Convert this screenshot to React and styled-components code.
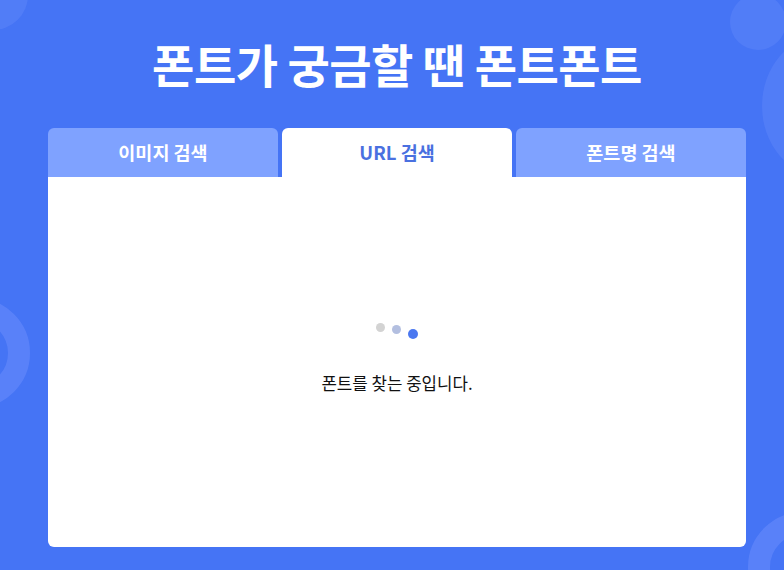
import React, { useState } from 'react'
import styled, { createGlobalStyle } from 'styled-components'

const GlobalStyle = createGlobalStyle`
    html, body {
        margin: 0;
        padding: 0;
        background-color: #4574f5;
    }
    body {
        font-family: "Noto Sans CJK KR", "Noto Sans", sans-serif;
    }
`

const Page = styled.div`
    position: relative;
    overflow: hidden;
    width: 100%;
    height: 570px;
    background-color: #4574f5;
    display: flex;
    flex-flow: column nowrap;
    align-items: center;
    box-sizing: border-box;
    padding: 0 38px 23px 48px;
`

const Blob = styled.div`
    position: absolute;
    border-radius: 50%;
    box-sizing: border-box;
    background: ${props => props.ring ? 'transparent' : 'rgba(120, 150, 255, 0.25)'};
    border: ${props => props.ring ? '22px solid rgba(120, 150, 255, 0.4)' : 'none'};
    pointer-events: none;
`

const Title = styled.h1`
    position: relative;
    margin: 0;
    height: 128px;
    display: flex;
    align-items: center;
    justify-content: center;
    padding-bottom: 2px;
    box-sizing: border-box;
    color: #ffffff;
    font-size: 46px;
    font-weight: 700;
    letter-spacing: -0.5px;
`

const Board = styled.div`
    position: relative;
    width: 698px;
    flex: 1;
    display: flex;
    flex-flow: column nowrap;
`

const TabBar = styled.div`
    display: grid;
    grid-template-columns: repeat(3, 1fr);
    gap: 4px;
    height: 49px;
`

const Tab = styled.button`
    border: none;
    margin: 0;
    padding: 0 0 2px;
    border-radius: 6px 6px 0 0;
    font-family: inherit;
    font-size: 18.5px;
    font-weight: 700;
    cursor: pointer;
    background-color: ${props => props.active ? '#ffffff' : '#7fa2ff'};
    color: ${props => props.active ? '#4a70e0' : '#ffffff'};
`

const Panel = styled.div`
    flex: 1;
    background-color: #ffffff;
    border-radius: 0 0 6px 6px;
    display: flex;
    flex-flow: column nowrap;
    align-items: center;
    justify-content: center;
    padding-bottom: 6px;
`

const Dots = styled.div`
    display: flex;
    gap: 7px;
    height: 20px;
    margin-left: 0;
`

const Dot = styled.span`
    width: ${props => props.size}px;
    height: ${props => props.size}px;
    border-radius: 50%;
    background-color: ${props => props.color};
    margin-top: ${props => props.drop}px;
`

const Message = styled.p`
    margin: 28px 0 0;
    font-size: 16.8px;
    color: #111111;
`

const tabs = ['이미지 검색', 'URL 검색', '폰트명 검색']

const App = () => {
    const [current, setCurrent] = useState(1)

    return (
        <Page>
            <GlobalStyle />
            <Blob style={{ width: 70, height: 70, left: -42, top: -40 }} />
            <Blob style={{ width: 56, height: 56, left: 730, top: -6 }} />
            <Blob style={{ width: 120, height: 140, left: 762, top: 36 }} />
            <Blob ring style={{ width: 110, height: 110, left: -80, top: 298 }} />
            <Blob ring style={{ width: 110, height: 110, left: 748, top: 512 }} />
            <Title>폰트가 궁금할 땐 폰트폰트</Title>
            <Board>
                <TabBar>
                    {tabs.map((label, i) => (
                        <Tab key={label} active={i === current} onClick={() => setCurrent(i)}>
                            {label}
                        </Tab>
                    ))}
                </TabBar>
                <Panel>
                    <Dots>
                        <Dot size={9} drop={0} color="#d3d3d3" />
                        <Dot size={9} drop={2} color="#b3bfe0" />
                        <Dot size={10} drop={6} color="#4b78f0" />
                    </Dots>
                    <Message>폰트를 찾는 중입니다.</Message>
                </Panel>
            </Board>
        </Page>
    )
}

export default App
